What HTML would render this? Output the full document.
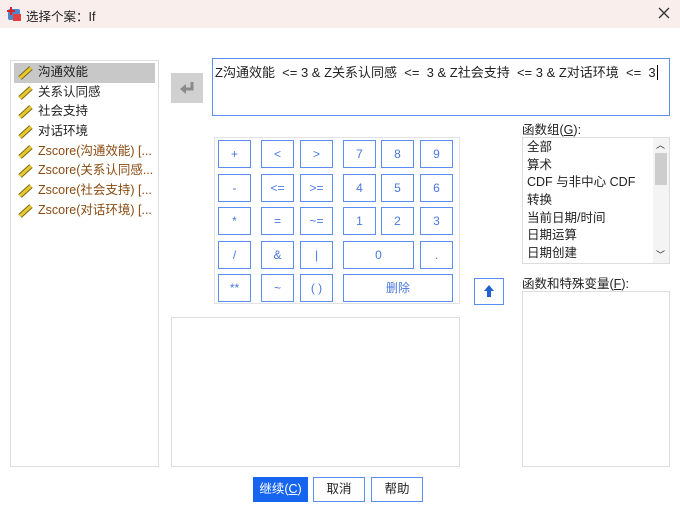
<!DOCTYPE html><html><head><meta charset="utf-8"><style>
body{margin:0;width:680px;height:511px;background:#fff;font-family:"Liberation Sans","Noto Sans CJK SC",sans-serif;font-size:12px;color:#222;position:relative;overflow:hidden}
.a{position:absolute;box-sizing:border-box}
.t{position:absolute;left:0;top:0;width:680px;height:28px;background:#f9eeec}
.k{position:absolute;border:1.5px solid #5b8ef0;background:#fff;color:#4a78e0;text-align:center;line-height:26px;font-size:12px;box-sizing:border-box;height:28px}
.li{height:19.7px;line-height:19.7px;padding-left:24px;position:relative;font-size:12.5px}
.li svg{position:absolute;left:4px;top:3px}
.z{color:#8a4a10}
.fl div{height:17.7px;line-height:17.7px;padding-left:4px;font-size:12.5px}
</style></head><body>
<div class="t"></div>
<svg class="a" style="left:6px;top:6px" width="16" height="16"><rect x="2" y="3" width="12" height="11" rx="2" fill="#4a88d0"/><rect x="7" y="8" width="8" height="7" fill="#e04040"/><path d="M1 5h8M5 1v8" stroke="#e02020" stroke-width="2"/></svg>
<div class="a" style="left:26px;top:6px;font-size:12.5px">选择个案：If</div>
<svg class="a" style="left:658px;top:7px" width="12" height="12"><path d="M1 1L11 11M11 1L1 11" stroke="#333" stroke-width="1.3"/></svg>

<div class="a" style="left:10px;top:60px;width:149px;height:407px;border:1px solid #ddd;padding:2px 3px">
<div class="li" style="background:#c8c8c8"><svg width="16" height="14"><path d="M2 12L13 2" stroke="#7a6a10" stroke-width="5"/><path d="M2 12L13 2" stroke="#e8c830" stroke-width="3"/></svg>沟通效能</div>
<div class="li"><svg width="16" height="14"><path d="M2 12L13 2" stroke="#7a6a10" stroke-width="5"/><path d="M2 12L13 2" stroke="#e8c830" stroke-width="3"/></svg>关系认同感</div>
<div class="li"><svg width="16" height="14"><path d="M2 12L13 2" stroke="#7a6a10" stroke-width="5"/><path d="M2 12L13 2" stroke="#e8c830" stroke-width="3"/></svg>社会支持</div>
<div class="li"><svg width="16" height="14"><path d="M2 12L13 2" stroke="#7a6a10" stroke-width="5"/><path d="M2 12L13 2" stroke="#e8c830" stroke-width="3"/></svg>对话环境</div>
<div class="li z"><svg width="16" height="14"><path d="M2 12L13 2" stroke="#7a6a10" stroke-width="5"/><path d="M2 12L13 2" stroke="#e8c830" stroke-width="3"/></svg>Zscore(沟通效能) [...</div>
<div class="li z"><svg width="16" height="14"><path d="M2 12L13 2" stroke="#7a6a10" stroke-width="5"/><path d="M2 12L13 2" stroke="#e8c830" stroke-width="3"/></svg>Zscore(关系认同感...</div>
<div class="li z"><svg width="16" height="14"><path d="M2 12L13 2" stroke="#7a6a10" stroke-width="5"/><path d="M2 12L13 2" stroke="#e8c830" stroke-width="3"/></svg>Zscore(社会支持) [...</div>
<div class="li z"><svg width="16" height="14"><path d="M2 12L13 2" stroke="#7a6a10" stroke-width="5"/><path d="M2 12L13 2" stroke="#e8c830" stroke-width="3"/></svg>Zscore(对话环境) [...</div>
</div>

<div class="a" style="left:171px;top:73px;width:32px;height:30px;background:#d0d0d0"><svg width="32" height="30"><path d="M21 9v7h-8" stroke="#8a8a8a" stroke-width="3" fill="none"/><path d="M9 16l6-5v10z" fill="#8a8a8a"/></svg></div>
<div class="a" style="left:212px;top:58px;width:458px;height:58px;border:1.5px solid #5b8ef0;padding:3px 2px;font-size:13px;white-space:nowrap">Z沟通效能&nbsp; &lt;= 3 &amp; Z关系认同感&nbsp; &lt;=&nbsp; 3 &amp; Z社会支持&nbsp; &lt;= 3 &amp; Z对话环境&nbsp; &lt;=&nbsp; 3<span style="border-left:1px solid #000;margin-left:1px"></span></div>

<div class="a" style="left:214px;top:137px;width:246px;height:167px;border:1px solid #e2e2e2"></div>
<div class="k" style="left:218px;top:140px;width:33px">+</div><div class="k" style="left:261px;top:140px;width:33px">&lt;</div><div class="k" style="left:300px;top:140px;width:33px">&gt;</div><div class="k" style="left:343px;top:140px;width:33px">7</div><div class="k" style="left:381px;top:140px;width:33px">8</div><div class="k" style="left:420px;top:140px;width:33px">9</div>
<div class="k" style="left:218px;top:174px;width:33px">-</div><div class="k" style="left:261px;top:174px;width:33px">&lt;=</div><div class="k" style="left:300px;top:174px;width:33px">&gt;=</div><div class="k" style="left:343px;top:174px;width:33px">4</div><div class="k" style="left:381px;top:174px;width:33px">5</div><div class="k" style="left:420px;top:174px;width:33px">6</div>
<div class="k" style="left:218px;top:207px;width:33px">*</div><div class="k" style="left:261px;top:207px;width:33px">=</div><div class="k" style="left:300px;top:207px;width:33px">~=</div><div class="k" style="left:343px;top:207px;width:33px">1</div><div class="k" style="left:381px;top:207px;width:33px">2</div><div class="k" style="left:420px;top:207px;width:33px">3</div>
<div class="k" style="left:218px;top:241px;width:33px">/</div><div class="k" style="left:261px;top:241px;width:33px">&amp;</div><div class="k" style="left:300px;top:241px;width:33px">|</div><div class="k" style="left:343px;top:241px;width:71px">0</div><div class="k" style="left:420px;top:241px;width:33px">.</div>
<div class="k" style="left:218px;top:274px;width:33px">**</div><div class="k" style="left:261px;top:274px;width:33px">~</div><div class="k" style="left:300px;top:274px;width:33px">( )</div><div class="k" style="left:343px;top:274px;width:110px">删除</div>
<div class="k" style="left:474px;top:278px;width:30px;height:27px"><svg width="26" height="24"><path d="M13 6l-5 6h3v6h4v-6h3z" fill="#2060d0"/></svg></div>

<div class="a" style="left:171px;top:317px;width:289px;height:150px;border:1px solid #ddd"></div>

<div class="a" style="left:522px;top:119px;font-size:12.5px">函数组(<u>G</u>):</div>
<div class="a fl" style="left:522px;top:137px;width:148px;height:127px;border:1px solid #ddd;padding-top:1px;overflow:hidden">
<div>全部</div><div>算术</div><div>CDF 与非中心 CDF</div><div>转换</div><div>当前日期/时间</div><div>日期运算</div><div>日期创建</div></div>
<div class="a" style="left:653px;top:138px;width:16px;height:125px;background:#f4f4f4"><div style="position:absolute;left:2px;top:15px;width:12px;height:32px;background:#cdcdcd"></div><div style="position:absolute;left:3px;top:0;font-size:9px">︿</div><div style="position:absolute;left:3px;top:110px;font-size:9px">﹀</div></div>
<div class="a" style="left:522px;top:273px;font-size:12.5px">函数和特殊变量(<u>F</u>):</div>
<div class="a" style="left:522px;top:291px;width:148px;height:176px;border:1px solid #ddd"></div>

<div class="a" style="left:253px;top:477px;width:55px;height:25px;background:#1565f0;color:#fff;text-align:center;line-height:25px;font-size:12.5px">继续(<u>C</u>)</div>
<div class="a" style="left:313px;top:477px;width:52px;height:25px;border:1.5px solid #5b8ef0;text-align:center;line-height:22px;font-size:12.5px">取消</div>
<div class="a" style="left:371px;top:477px;width:52px;height:25px;border:1.5px solid #5b8ef0;text-align:center;line-height:22px;font-size:12.5px">帮助</div>
</body></html>
